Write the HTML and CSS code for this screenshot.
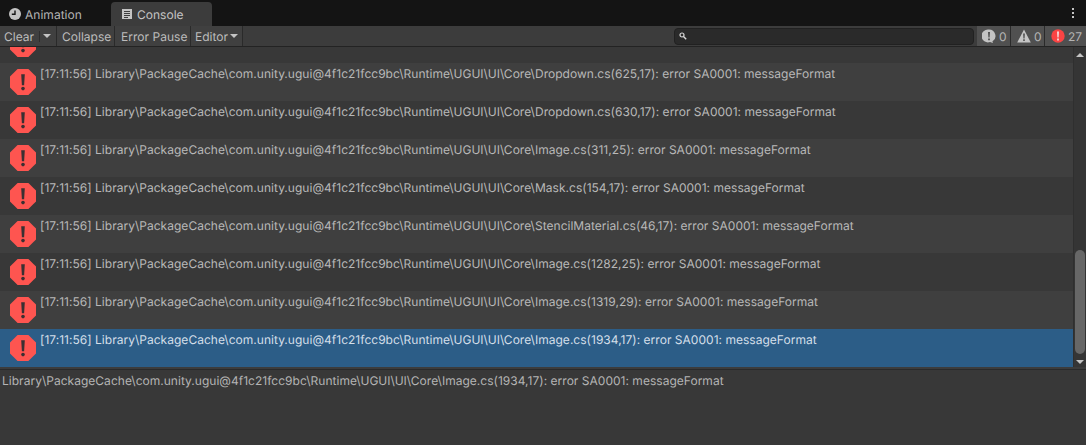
FILE: index.html
```html
<!DOCTYPE html>
<html lang="en">
<head>
<meta charset="utf-8">
<title>Console</title>
<link rel="stylesheet" href="styles.css">
</head>
<body>
<svg class="defs" width="0" height="0" aria-hidden="true">
  <symbol id="err" viewBox="0 0 26 26">
    <polygon points="7.6,0 18.4,0 26,7.6 26,18.4 18.4,26 7.6,26 0,18.4 0,7.6" fill="#fe5550"/>
    <path d="M11.2 5.2h3.6l-.7 11h-2.2z" fill="#3a3032"/>
    <circle cx="13" cy="19.6" r="1.8" fill="#3a3032"/>
  </symbol>
</svg>
<div class="tabbar">
  <div class="tab">
    <svg class="tabicon" viewBox="0 0 12 12"><circle cx="6" cy="6" r="6" fill="#c4c4c4"/><path d="M6 2.5V6.2H2.8" fill="none" stroke="#161616" stroke-width="1.4"/></svg>
    <span>Animation</span>
  </div>
  <div class="tab tab-active">
    <svg class="tabicon tabicon-doc" viewBox="0 0 10 10"><path fill="#c4c4c4" d="M0 0h10v10H0z"/><path stroke="#3c3c3c" stroke-width="1" d="M2 2.5h6M2 4.5h6M2 6.5h6M2 8.5h4"/></svg>
    <span>Console</span>
  </div>
  <div class="kebab"><i></i><i></i><i></i></div>
</div>
<div class="toolbar">
  <div class="tb tb-clear">Clear<i class="minisep"></i></div>
  <div class="tb tb-arrow"><b class="caret"></b></div>
  <div class="tb tb-collapse">Collapse</div>
  <div class="tb tb-pause">Error Pause</div>
  <div class="tb tb-editor">Editor<b class="caret"></b></div>
  <div class="spacer"></div>
  <div class="search">
    <svg class="searchicon" viewBox="0 0 8 8"><circle cx="3" cy="3" r="2" fill="none" stroke="#d8d8d8" stroke-width="1.2"/><path d="M4.5 4.5L7.2 7.2" stroke="#d8d8d8" stroke-width="1.4"/></svg>
  </div>
  <div class="count count-first">
    <svg class="cicon" viewBox="0 0 14 14"><path d="M7 0.5a6.5 6.5 0 0 1 3.4 12l.6 1.5-3-.9A6.5 6.5 0 1 1 7 .5z" fill="#c4c4c4"/><path d="M6 3h2l-.4 5.5H6.4zM6.1 9.5h1.8v1.8H6.1z" fill="#505050"/></svg>
    <span>0</span>
  </div>
  <div class="count">
    <svg class="cicon" viewBox="0 0 14 14"><path d="M7 .5L13.8 13.5H.2z" fill="#c4c4c4"/><path d="M6.1 4.5h1.8l-.3 5H6.4zM6.2 10.3h1.6v1.6H6.2z" fill="#505050"/></svg>
    <span>0</span>
  </div>
  <div class="count count-last">
    <svg class="cicon" viewBox="0 0 14 14"><circle cx="7" cy="7" r="6.7" fill="#fb4444"/><path d="M6 2.6h2l-.4 6H6.4zM6.1 9.6h1.8v1.8H6.1z" fill="#f5dcdc"/></svg>
    <span>27</span>
  </div>
</div>
<div class="main">
  <div class="list">
    <div class="partial"><svg class="erricon"><use href="#err"/></svg></div>
    <div class="row row-odd"><svg class="erricon"><use href="#err"/></svg><span class="msg">[17:11:56] Library\PackageCache\com.unity.ugui@4f1c21fcc9bc\Runtime\UGUI\UI\Core\Dropdown.cs(625,17): error SA0001: messageFormat</span></div>
    <div class="row"><svg class="erricon"><use href="#err"/></svg><span class="msg">[17:11:56] Library\PackageCache\com.unity.ugui@4f1c21fcc9bc\Runtime\UGUI\UI\Core\Dropdown.cs(630,17): error SA0001: messageFormat</span></div>
    <div class="row row-odd"><svg class="erricon"><use href="#err"/></svg><span class="msg">[17:11:56] Library\PackageCache\com.unity.ugui@4f1c21fcc9bc\Runtime\UGUI\UI\Core\Image.cs(311,25): error SA0001: messageFormat</span></div>
    <div class="row"><svg class="erricon"><use href="#err"/></svg><span class="msg">[17:11:56] Library\PackageCache\com.unity.ugui@4f1c21fcc9bc\Runtime\UGUI\UI\Core\Mask.cs(154,17): error SA0001: messageFormat</span></div>
    <div class="row row-odd"><svg class="erricon"><use href="#err"/></svg><span class="msg">[17:11:56] Library\PackageCache\com.unity.ugui@4f1c21fcc9bc\Runtime\UGUI\UI\Core\StencilMaterial.cs(46,17): error SA0001: messageFormat</span></div>
    <div class="row"><svg class="erricon"><use href="#err"/></svg><span class="msg">[17:11:56] Library\PackageCache\com.unity.ugui@4f1c21fcc9bc\Runtime\UGUI\UI\Core\Image.cs(1282,25): error SA0001: messageFormat</span></div>
    <div class="row row-odd"><svg class="erricon"><use href="#err"/></svg><span class="msg">[17:11:56] Library\PackageCache\com.unity.ugui@4f1c21fcc9bc\Runtime\UGUI\UI\Core\Image.cs(1319,29): error SA0001: messageFormat</span></div>
    <div class="row row-selected"><svg class="erricon"><use href="#err"/></svg><span class="msg">[17:11:56] Library\PackageCache\com.unity.ugui@4f1c21fcc9bc\Runtime\UGUI\UI\Core\Image.cs(1934,17): error SA0001: messageFormat</span></div>
  </div>
  <div class="scrollbar">
    <b class="arrow-up"></b>
    <div class="track"><div class="thumb"></div></div>
    <b class="arrow-down"></b>
  </div>
</div>
<div class="splitter"></div>
<div class="details">Library\PackageCache\com.unity.ugui@4f1c21fcc9bc\Runtime\UGUI\UI\Core\Image.cs(1934,17): error SA0001: messageFormat</div>
</body>
</html>
```

FILE: styles.css
```css
* { box-sizing: border-box; }
html, body { margin: 0; padding: 0; height: 100%; }
body {
  width: 1086px;
  height: 445px;
  overflow: hidden;
  background: #383838;
  color: #c4c4c4;
  font-family: Inter, "Liberation Sans", sans-serif;
  font-size: 12px;
  letter-spacing: 0.022px;
  text-rendering: geometricPrecision;
  display: flex;
  flex-direction: column;
}
.defs { display: block; height: 0; }

.tabbar {
  height: 26px;
  flex: none;
  background: #141414;
  display: flex;
  align-items: flex-end;
  padding-left: 1px;
}
.tab {
  width: 110px;
  height: 24px;
  display: flex;
  align-items: center;
  gap: 4px;
  padding-left: 8px;
  color: #b4b4b4;
}
.tab-active {
  width: 101px;
  background: #3c3c3c;
  border-radius: 4px 4px 0 0;
  padding-left: 11px;
  gap: 5px;
  color: #c4c4c4;
}
.tabicon { width: 12px; height: 12px; flex: none; }
.tabicon-doc { width: 10px; height: 10px; }
.kebab {
  margin-left: auto;
  margin-right: 12px;
  align-self: center;
  display: flex;
  flex-direction: column;
  gap: 2px;
}
.kebab i { width: 2px; height: 2px; background: #c4c4c4; display: block; }

.toolbar {
  height: 21px;
  flex: none;
  background: #3c3c3c;
  border-bottom: 1px solid #232323;
  display: flex;
  align-items: stretch;
}
.tb {
  display: flex;
  align-items: center;
  padding-left: 4px;
  color: #bcbcbc;
  border-right: 1px solid #2a2a2a;
  background: #404040;
}
.tb-clear { width: 40px; border-right: 0; }
.minisep { margin-left: auto; width: 1px; height: 11px; background: #2e2e2e; }
.tb-arrow { width: 17px; padding-left: 2px; }
.tb-collapse { width: 58px; padding-left: 5px; }
.tb-pause { width: 76px; padding-left: 6px; }
.tb-editor { width: 52px; padding-left: 4px; }
.caret {
  display: block;
  width: 0;
  height: 0;
  border-left: 4px solid transparent;
  border-right: 4px solid transparent;
  border-top: 4px solid #c4c4c4;
  margin-left: 2px;
}
.tb-arrow .caret { margin-left: 1px; }
.spacer { flex: 1; }
.search {
  width: 300px;
  height: 17px;
  align-self: center;
  margin-right: 3px;
  border-radius: 4px;
  background: #2a2a2a;
  border: 1px solid #212121;
  display: flex;
  align-items: center;
  padding-left: 4px;
}
.searchicon { width: 8px; height: 8px; }
.count {
  width: 34px;
  display: flex;
  align-items: center;
  gap: 3px;
  padding-left: 6px;
  background: #505050;
  border-left: 1px solid #2a2a2a;
  color: #b4b4b4;
}
.count-first { width: 33px; padding-left: 5px; border-left: 0; }
.count-last { width: 42px; }
.cicon { width: 14px; height: 14px; flex: none; }

.main {
  height: 320px;
  flex: none;
  display: flex;
}
.list {
  flex: 1;
  min-width: 0;
  display: flex;
  flex-direction: column;
  overflow: hidden;
}
.partial {
  height: 16px;
  flex: none;
  background: #383838;
  overflow: hidden;
}
.partial .erricon { margin-top: -16px; margin-left: 10px; display: block; }
.row {
  height: 38px;
  flex: none;
  display: flex;
  align-items: flex-start;
  padding-left: 10px;
  background: #383838;
  white-space: nowrap;
  color: #b8b8b8;
}
.row-odd { background: #3f3f3f; }
.row-selected { background: #2c5d87; color: #d4dfe9; }
.erricon { width: 26px; height: 26px; flex: none; margin-top: 6px; }
.msg { margin-left: 4px; margin-top: 3px; line-height: 15px; }

.scrollbar {
  width: 13px;
  flex: none;
  background: #353535;
  border-left: 1px solid #2f2f2f;
  display: flex;
  flex-direction: column;
  align-items: center;
}
.arrow-up, .arrow-down {
  display: block;
  flex: none;
  width: 0;
  height: 0;
  border-left: 4px solid transparent;
  border-right: 4px solid transparent;
}
.arrow-up { border-bottom: 4px solid #c4c4c4; margin: 6px 0 3px; }
.arrow-down { border-top: 4px solid #c4c4c4; margin: 4px 0 3px; }
.track { flex: 1; width: 100%; display: flex; flex-direction: column; justify-content: flex-end; }
.thumb { height: 104px; width: 10px; margin: 0 0 2px 1px; background: #676767; border-radius: 5px; }

.splitter {
  height: 3px;
  flex: none;
  background: #3c3c3c;
  border-bottom: 1px solid #2a2a2a;
}
.details {
  flex: 1;
  padding: 3px 2px;
  line-height: 15px;
  color: #b4b4b4;
  white-space: nowrap;
}
```
